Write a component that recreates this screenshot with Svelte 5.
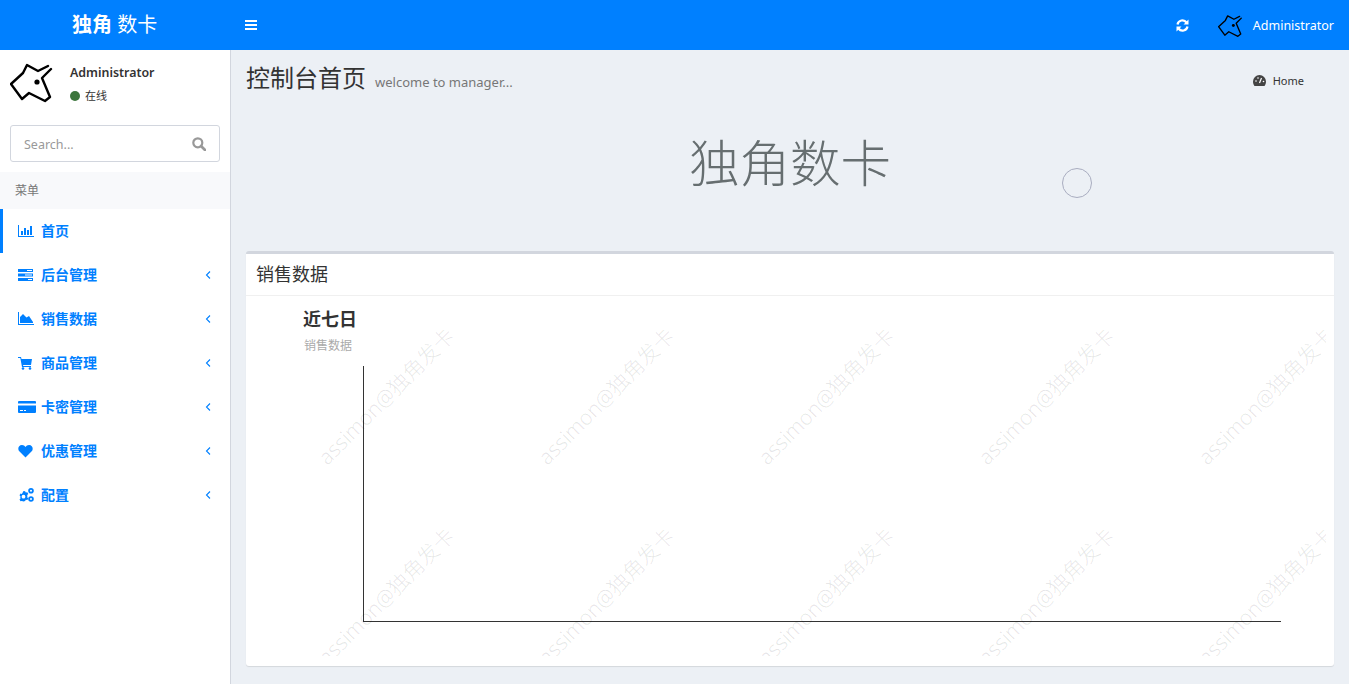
<script>
  const menu = [
    { label: "后台管理", icon: "tasks" },
    { label: "销售数据", icon: "area" },
    { label: "商品管理", icon: "cart" },
    { label: "卡密管理", icon: "card" },
    { label: "优惠管理", icon: "heart" },
    { label: "配置", icon: "cogs" }
  ];

  const marks = [];
  for (const top of [100, 300]) {
    for (let i = 0; i < 5; i++) marks.push({ left: 130 + i * 220, top });
  }
</script>

{#snippet unicorn(size)}
  <svg class="unicorn" width={size} height={size} viewBox="0 0 44 44" fill="none" stroke="#000" stroke-width="2.4" stroke-linejoin="round" stroke-linecap="round">
    <path d="M38 6 28 11 17 5l-4 8L1 24l11 15 7-6 16 8 5-4-8-19 9-9" />
    <circle cx="27" cy="22" r="2.600" fill="#000" stroke="none" />
  </svg>
{/snippet}

{#snippet icon(name)}
  <svg class="icon" viewBox="0 0 18 14" fill="currentColor">
    {#if name === "chart"}
      <path d="M0 1h1v11h15v1H0z" /><path d="M3 7h2v4H3zM6 4h2v7H6zM9 6h2v5H9zM12 2h2v9h-2z" />
    {:else if name === "tasks"}
      <path d="M0 1h15v3H0zM0 5.500h15v3H0zM0 10h15v3H0z" /><path d="M9 2h5v1H9zM7 6.500h7v1H7zM10 11h4v1h-4z" fill="#fff" />
    {:else if name === "area"}
      <path d="M0 0h1v12h15v1H0z" /><path d="M2 11V5l3-3 3.500 3.500L11 4l4 6v1z" />
    {:else if name === "cart"}
      <path d="M0 1h3l.5 2H14l-1 6H5l.3 1H13v1H4L2.300 2H0z" /><circle cx="5" cy="12.500" r="1.300" /><circle cx="12" cy="12.500" r="1.300" />
    {:else if name === "card"}
      <path d="M1 1h16a1 1 0 0 1 1 1v1.500H0V2a1 1 0 0 1 1-1zM0 5.500h18V12a1 1 0 0 1-1 1H1a1 1 0 0 1-1-1z" /><path d="M2 10h3v1H2zM6 10h2v1H6z" fill="#fff" />
    {:else if name === "heart"}
      <path d="M7.500 13.500 1.300 7.300C-.6 5.300.2 1 4 1c1.500 0 2.700.8 3.500 2C8.300 1.800 9.500 1 11 1c3.800 0 4.600 4.300 2.700 6.300z" />
    {:else if name === "cogs"}
      <path fill-rule="evenodd" d="M5.500 3l1.600.3.7 1.300 1.500-.3 1 1.700-1.100 1.100.2 1.100-.2 1.100 1.100 1.100-1 1.700-1.500-.3-.7 1.200-1.600.4L3.900 13l-1.400.3-1-1.700 1-1.200-.2-1 .2-1-1-1.200 1-1.700 1.400.4z M5.500 6.800a1.900 1.900 0 1 0 0 3.800 1.900 1.900 0 0 0 0-3.800z" />
      <path fill-rule="evenodd" d="M13 0a2.800 2.800 0 1 1 0 5.600A2.800 2.800 0 0 1 13 0zm0 1.800a1 1 0 1 0 0 2 1 1 0 0 0 0-2zM13 8.200A2.800 2.800 0 1 1 13 13.800 2.800 2.800 0 0 1 13 8.200zm0 1.800a1 1 0 1 0 0 2 1 1 0 0 0 0-2z" />
    {/if}
  </svg>
{/snippet}

<div class="page">
  <header class="topbar">
    <div class="logo"><b>独角</b> 数卡</div>
    <div class="topnav">
      <svg class="burger" width="12" height="12" viewBox="0 0 12 12" fill="#fff"><path d="M0 1h12v2H0zM0 5h12v2H0zM0 9h12v2H0z" /></svg>
      <div class="topright">
        <svg class="refresh" width="13" height="13" viewBox="0 0 13 13" fill="none" stroke="#fff" stroke-width="2.200">
          <path d="M1.500 5.500A5 5 0 0 1 10.500 3.500" /><path d="M11.500 7.500A5 5 0 0 1 2.500 9.500" />
          <path d="M12.500.5v5h-5zM.5 12.500v-5h5z" fill="#fff" stroke="none" />
        </svg>
        <span class="topuser">{@render unicorn(25)}</span>
        <span class="topname">Administrator</span>
      </div>
    </div>
  </header>

  <div class="body">
    <aside class="sidebar">
      <div class="userpanel">
        {@render unicorn(44)}
        <div class="userinfo">
          <p class="username">Administrator</p>
          <p class="status"><i class="dot"></i>在线</p>
        </div>
      </div>
      <div class="search">
        <span>Search...</span>
        <svg width="14" height="14" viewBox="0 0 14 14" fill="none" stroke="#999" stroke-width="2.200"><circle cx="5.800" cy="5.800" r="4.500" /><path d="M9 9l4 4" stroke-linecap="round" stroke-width="2.600" /></svg>
      </div>
      <div class="menuhead">菜单</div>
      <nav class="menu">
        <a class="item active">{@render icon("chart")}<span>首页</span></a>
        {#each menu as m}
          <a class="item">
            {@render icon(m.icon)}<span>{m.label}</span>
            <svg class="chev" width="6" height="10" viewBox="0 0 6 10" fill="none" stroke="currentColor" stroke-width="1.100"><path d="M5 1.500 1.500 5 5 8.500" /></svg>
          </a>
        {/each}
      </nav>
    </aside>

    <main class="content">
      <div class="pagehead">
        <h1>控制台首页<small>welcome to manager...</small></h1>
        <div class="crumb">
          <svg width="13" height="11" viewBox="0 0 13 11"><path d="M6.500 0A6.500 6.500 0 0 0 0 6.500c0 1.700.6 3.200 1.500 4.500h10c.9-1.300 1.500-2.800 1.500-4.500A6.500 6.500 0 0 0 6.500 0z" fill="#444" /><path d="M6.500 8 8.500 3" stroke="#fff" stroke-width="1.200" /><circle cx="3" cy="6" r=".8" fill="#fff" /><circle cx="10.500" cy="6.500" r=".8" fill="#fff" /><circle cx="5" cy="3" r=".8" fill="#fff" /></svg>
          <span>Home</span>
        </div>
      </div>

      <div class="hero">独角数卡<i class="ring"></i></div>

      <section class="card">
        <h3 class="cardtitle">销售数据</h3>
        <div class="chart">
          <div class="charttitle">近七日</div>
          <div class="chartsub">销售数据</div>
          <div class="axes"></div>
          {#each marks as w}
            <span class="mark" style="left: {w.left}px; top: {w.top}px">assimon@独角发卡</span>
          {/each}
        </div>
      </section>
    </main>
  </div>
</div>

<style>
  :global(body) {
    margin: 0;
    background: #ecf0f5;
    overflow: hidden;
  }

  .page {
    height: 684px;
    font-family: "Noto Sans", "Noto Sans CJK SC", sans-serif;
    color: #333;
  }

  .topbar {
    display: flex;
    height: 50px;
    background: #0080ff;
    color: #fff;
  }

  .logo {
    box-sizing: border-box;
    width: 230px;
    padding-left: 72px;
    font-size: 20px;
    line-height: 50px;
  }

  .topnav {
    flex: 1;
    display: flex;
    align-items: center;
    justify-content: space-between;
    padding: 0 15px;
  }

  .burger {
    display: block;
  }

  .topright {
    display: flex;
    align-items: center;
  }

  .refresh {
    margin-right: 29px;
  }

  .topuser {
    display: flex;
    margin-right: 10px;
  }

  .topname {
    font-size: 12.500px;
  }

  .body {
    display: flex;
    height: 634px;
  }

  .sidebar {
    width: 230px;
    flex: none;
    background: #fff;
    border-right: 1px solid #d2d6de;
  }

  .userpanel {
    display: flex;
    height: 75px;
    box-sizing: border-box;
    padding: 10px 0 0 10px;
  }

  .unicorn {
    display: block;
    flex: none;
  }

  .userinfo {
    margin-left: 16px;
  }

  .username {
    margin: 4px 0 0;
    font-size: 12.400px;
    font-weight: 600;
    line-height: 18px;
  }

  .status {
    display: flex;
    align-items: center;
    margin: 5px 0 0;
    font-size: 11px;
    line-height: 18px;
  }

  .dot {
    width: 10px;
    height: 10px;
    margin-right: 5px;
    border-radius: 50%;
    background: #3c763d;
  }

  .search {
    box-sizing: border-box;
    display: flex;
    align-items: center;
    justify-content: space-between;
    height: 37px;
    margin: 0 10px;
    padding: 1px 13px 0;
    border: 1px solid #d2d6de;
    border-radius: 3px;
    font-size: 12.500px;
    color: #999;
  }

  .menuhead {
    height: 37px;
    margin-top: 10px;
    padding-left: 15px;
    background: #f8f9fb;
    font-size: 12px;
    line-height: 37px;
    color: #777;
  }

  .item {
    box-sizing: border-box;
    display: flex;
    align-items: center;
    height: 44px;
    padding-left: 18px;
    border-left: 0 solid #0080ff;
    font-size: 14px;
    font-weight: 700;
    color: #0080ff;
  }

  .item span {
    margin-top: -3px;
  }

  .item.active {
    padding-left: 15px;
    border-left-width: 3px;
  }

  .icon {
    width: 18px;
    height: 14px;
    margin-right: 5px;
    flex: none;
  }

  .chev {
    margin-left: auto;
    margin-right: 19px;
  }

  .content {
    flex: 1;
    min-width: 0;
    padding: 0 15px;
  }

  .pagehead {
    display: flex;
    align-items: center;
    justify-content: space-between;
    height: 60px;
  }

  h1 {
    margin: 0;
    font-size: 24px;
    font-weight: 400;
    line-height: 58px;
  }

  small {
    margin-left: 9px;
    font-size: 13px;
    color: #777;
  }

  .crumb {
    display: flex;
    align-items: center;
    gap: 7px;
    margin-right: 30px;
    font-size: 11px;
  }

  .hero {
    position: relative;
    height: 141px;
    font-size: 50.500px;
    font-weight: 300;
    line-height: 106px;
    text-align: center;
    color: #666e70;
  }

  .ring {
    position: absolute;
    left: 816px;
    top: 58px;
    box-sizing: border-box;
    width: 30px;
    height: 30px;
    border: 1px solid #a9adc0;
    border-radius: 50%;
  }

  .card {
    height: 415px;
    box-sizing: border-box;
    background: #fff;
    border-top: 3px solid #d2d6de;
    border-radius: 3px;
    box-shadow: 0 1px 1px rgba(0, 0, 0, 0.1);
  }

  .cardtitle {
    box-sizing: border-box;
    height: 42px;
    margin: 0;
    padding-left: 10px;
    border-bottom: 1px solid #f0f0f0;
    font-size: 18px;
    font-weight: 400;
    line-height: 40px;
  }

  .chart {
    position: relative;
    height: 360px;
    margin: 0 8px 0 10px;
    overflow: hidden;
  }

  .charttitle {
    padding: 10px 0 0 47px;
    font-size: 18px;
    font-weight: 700;
    line-height: 26px;
  }

  .chartsub {
    padding: 5px 0 0 48px;
    font-size: 12px;
    line-height: 18px;
    color: #aaa;
  }

  .axes {
    height: 255px;
    margin: 11px 45px 0 107px;
    border-left: 1px solid #333;
    border-bottom: 1px solid #333;
  }

  .mark {
    position: absolute;
    transform: translate(-50%, -50%) rotate(-45deg);
    font-size: 21px;
    font-weight: 300;
    line-height: 24px;
    white-space: nowrap;
    color: rgba(0, 0, 0, 0.1);
  }
</style>
